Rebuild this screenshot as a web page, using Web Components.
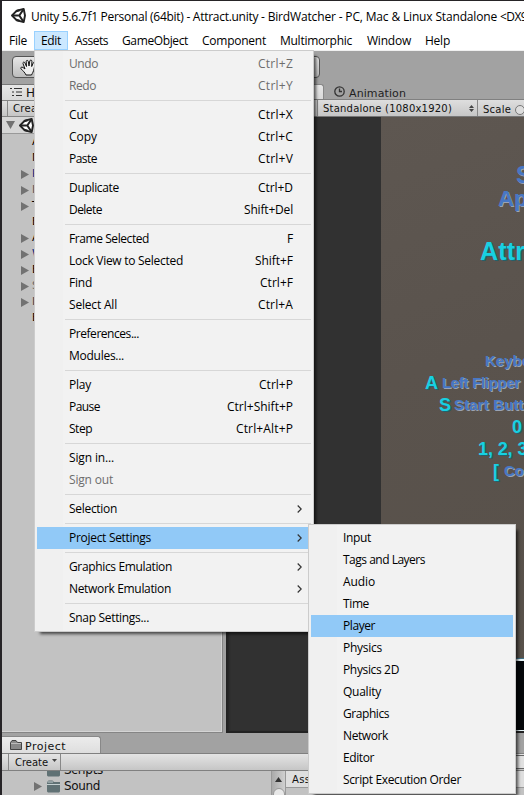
<!DOCTYPE html>
<html lang="en"><head><meta charset="utf-8"><title>Unity</title>
<style>html,body{margin:0;width:524px;height:795px;overflow:hidden}</style></head><body>
<editor-window></editor-window>
<script>
class Base extends HTMLElement{
  render(html){this.attachShadow({mode:'open'}).innerHTML=html;}
}
/* Text whose tracking is adjusted to a given advance width (w, px). */
class FitText extends Base{
  connectedCallback(){
    if(this.shadowRoot)return;
    this.render('<style>:host{display:inline-block;white-space:pre;flex:none}span{display:inline-block;white-space:pre}</style><span><slot></slot></span>');
    const w=parseFloat(this.getAttribute('w')),n=this.textContent.length,s=this.shadowRoot.querySelector('span');
    if(!w)return;
    const nat=s.getBoundingClientRect().width;
    s.style.letterSpacing=((w-nat)/n)+'px';
    this.style.width=w+'px';
  }
}
customElements.define('fit-text',FitText);

class MenuItem extends Base{
  connectedCallback(){
    const a=k=>this.getAttribute(k);
    const [key,kw]=(a('key')||'').split('|');
    this.render(`<style>
      :host{display:flex;height:22px;align-items:center;box-sizing:border-box;padding:0 18px 0 32px;justify-content:space-between;color:#000}
      :host([disabled]){color:#6d6d6d}
      :host([active]){background:#91c9f7}
      :host([sub]){padding-right:9px}
      svg{display:block;width:5px;height:8px}
    </style><fit-text w="${a('w')}">${a('label')}</fit-text>${key?`<fit-text w="${kw}">${key}</fit-text>`:''}${this.hasAttribute('sub')?'<svg viewBox="0 0 5 8"><path d="M.7 .5 4.2 4 .7 7.5" fill="none" stroke="#333" stroke-width="1.2"/></svg>':''}`);
  }
}
customElements.define('menu-item',MenuItem);

class MenuSep extends Base{
  connectedCallback(){this.render('<style>:host{display:block;height:7px;padding:3px 0 0 28px;box-sizing:border-box}i{display:block;height:1px;background:#d7d7d7}</style><i></i>');}
}
customElements.define('menu-sep',MenuSep);

class PopupMenu extends Base{
  connectedCallback(){
    this.render(`<style>:host{display:block;box-sizing:border-box;border:1px solid #ccc;padding:2px;background:linear-gradient(90deg,#f0f0f0 28px,#f2f2f2 28px);box-shadow:4px 4px 3px -2px rgba(0,0,0,.65);font:12px/16px "Open Sans","Noto Sans",sans-serif}</style><slot></slot>`);
  }
}
customElements.define('popup-menu',PopupMenu);

class TitleBar extends Base{
  connectedCallback(){
    this.render(`<style>:host{display:flex;height:30px;background:#fff;align-items:center;padding-left:9px;font:12px/16px "Open Sans","Noto Sans",sans-serif;color:#000;overflow:hidden}
    unity-logo{width:15px;height:15px;margin:-2px 5px 0 0;flex:none}fit-text{padding-top:1px}</style>
    <unity-logo></unity-logo><fit-text w="230">Unity 5.6.7f1 Personal (64bit) - Attract.unity </fit-text><fit-text w="239">- BirdWatcher - PC, Mac &amp; Linux Standalone </fit-text><fit-text w="27">&lt;DX9</fit-text>`);
  }
}
class UnityLogo extends Base{
  connectedCallback(){this.render(`<style>:host{display:block}svg{display:block;width:100%;height:100%}</style>
  <svg viewBox="0 0 15 15"><path d="M1 7.500 5.800 2.600 12.700 1 14 7.500 12.700 14 5.800 12.400Z" fill="#fff" stroke="#222" stroke-width="1.900" stroke-linejoin="round"/><path d="M1.500 7.500H8.300M8.300 7.500 12.400 1.400M8.300 7.500 12.400 13.600" stroke="#222" stroke-width="2"/><path d="M5 3.200 8.600 2.200M5 11.800 8.600 12.800" stroke="#222" stroke-width="2.200"/></svg>`);}
}
customElements.define('unity-logo',UnityLogo);
customElements.define('title-bar',TitleBar);

class MenuBar extends Base{
  connectedCallback(){
    const m=[['File',18],['Edit',20],['Assets',33],['GameObject',66],['Component',64],['Multimorphic',72],['Window',44],['Help',25]];
    this.render(`<style>:host{display:flex;height:20px;background:#fff;box-sizing:border-box;border-bottom:1px solid #f0f0f0;font:12px/16px "Open Sans","Noto Sans",sans-serif;color:#000}
    div{box-sizing:border-box;height:19px;padding:2px 7px 0}.on{background:#cce8ff;border:1px solid #99d1ff;padding:1px 6px 0}div:nth-of-type(n+7){padding-left:8px}div:nth-of-type(8){padding-left:7px}</style>${m.map(([t,w])=>`<div class="${t=='Edit'?'on':''}"><fit-text w="${w}">${t}</fit-text></div>`).join('')}`);
  }
}
customElements.define('menu-bar',MenuBar);

class ToolStrip extends Base{
  connectedCallback(){this.render(`<style>:host{display:flex;height:33px;background:#a2a2a2;box-sizing:border-box;padding:5px 204px 6px 10px}
   .b{flex:1;box-sizing:border-box;height:22px;border:1px solid #555;border-radius:4px;background:linear-gradient(#e6e6e6,#bdbdbd);padding:1px 0 0 7px}svg{display:block}</style>
   <div class="b"><svg width="18" height="19" viewBox="0 0 18 19"><path d="M6 17C5 14.500 3 13 1 10.800 .3 9.500 1.600 8.500 3 9.500L5 11 3 5.500C2.700 4 4.200 3.500 5 5L6.500 8.500 6.200 3.500C6.200 2 8 2 8.300 3.500L9 8 9.800 3C10.100 1.600 11.900 1.800 11.900 3.300L11.700 8.500 13.300 4.800C14 3.500 15.400 4 15.200 5.500L14 11C13.500 13.500 12.500 15 11.500 17Z" fill="#eee" stroke="#111" stroke-width="1"/></svg></div>`);}
}
customElements.define('tool-strip',ToolStrip);

class TreeRow extends Base{
  connectedCallback(){
    const a=k=>this.getAttribute(k);
    this.render(`<style>:host{display:flex;height:16px;align-items:center;padding-left:19px;gap:3px;font:11px/16px "DejaVu Sans",sans-serif;color:${a('c')||'#000'}}i{width:8px;height:9px}svg{display:block}</style>
    <i>${this.hasAttribute('open')?'<svg width="8" height="9"><path d="M0 0 8 4.500 0 9Z" fill="#727272"/></svg>':''}</i><span>${a('t')}</span>`);
  }
}
customElements.define('tree-row',TreeRow);

class HierarchyPanel extends Base{
  connectedCallback(){
    const r=[['A'],['M'],['P',1,'#00287c'],['I',1,'#555'],['T',1],['E'],['A',1],['W',1,'#00287c'],['E',1],['S',1,'#666'],['I',1,'#444'],['E']];
    this.render(`<style>:host{display:flex;flex-direction:column;width:221px;background:#a2a2a2;font:11px/16px "DejaVu Sans",sans-serif;color:#111;overflow:hidden}
    .tab{height:16px;display:flex;background:linear-gradient(#e6e6e6,#d9d9d9);border-top:1px solid #777;box-sizing:border-box;padding:1px 0 0 8px;gap:4px;width:150px}
    .tab svg{margin-top:1px}.tab span{font-size:12px;line-height:15px}
    .bar{height:17px;display:flex;box-sizing:border-box;border-top:1px solid #858585;border-bottom:1px solid #858585;background:linear-gradient(#e0e0e0,#c5c5c5);font-size:10px;line-height:16px;letter-spacing:.3px}
    .bar span{margin-left:5px;border-left:1px solid #888;padding-left:5px}
    .scene{height:17px;box-sizing:border-box;background:#d6d6d6;border-bottom:1px solid #999;display:flex;align-items:center;padding-left:4px;gap:4px}
    unity-logo{width:15px;height:15px}
    .list{flex:1;background:#c2c2c2;border:solid #858585;border-width:0 1px 1px 0;box-shadow:inset -1px -1px #d4d4d4}svg{display:block}</style>
    <div class="tab"><svg width="12" height="10" stroke="#333"><path d="M0 1.500H2M4 1.500H12M2 5H4M6 5H12M2 8.500H4M6 8.500H12"/></svg><span>H</span></div>
    <div class="bar"><span>Crea</span></div>
    <div class="scene"><svg width="9" height="8"><path d="M0 0H9L4.500 8Z" fill="#727272"/></svg><unity-logo></unity-logo></div>
    <div class="list">${r.map(([t,o,c])=>`<tree-row t="${t}" ${o?'open':''} ${c?`c="${c}"`:''}></tree-row>`).join('')}</div>`);
  }
}
customElements.define('hierarchy-panel',HierarchyPanel);

class GameView extends Base{
  connectedCallback(){
    const L=(h,pl,inner)=>`<div class="l" style="height:${h}px;line-height:${h}px;padding-left:${pl}px">${inner}</div>`;
    this.render(`<style>:host{display:flex;flex-direction:column;flex:1;min-width:0;overflow:hidden;font:11px/16px "DejaVu Sans",sans-serif;color:#111}
    .tabs{height:15px;display:flex;background:#a2a2a2}
    .tab{width:98px;box-sizing:border-box;background:linear-gradient(#e6e6e6,#d9d9d9);border:solid #888;border-width:1px 1px 0 0;border-radius:0 3px 0 0;margin-right:10px;flex:none}
    .tabs svg{margin:2px 4px 0 0;flex:none}.tabs fit-text{line-height:20px;color:#222}
    .bar{height:18px;box-sizing:border-box;border-top:1px solid #808080;border-bottom:1px solid #777;background:linear-gradient(#dedede,#c6c6c6);display:flex;font-size:10px;line-height:17px;padding-left:91px}
    .dd{box-sizing:border-box;border:solid #888;border-width:0 1px;width:161px;display:flex;justify-content:space-between;padding:0 3px 0 5px;align-items:center;flex:none}
    .sc{padding:1px 0 0 5px;display:flex;gap:4px}.dot{width:8px;height:8px;margin-top:4px;border:1px solid #777;border-radius:50%;background:#ddd;flex:none}
    .view{flex:1;display:flex;background:#313131;border:1px solid #222;border-width:0 0 2px 1px;min-height:0}
    .pad{width:154px;flex:none;box-shadow:inset 3px 0 2px -1px #242424}
    .game{flex:1;min-width:0;background:linear-gradient(160deg,#5e5751,#5a534d 40%,#575049);display:flex;flex-direction:column;padding-top:46px;box-sizing:border-box;overflow:hidden;font-family:"Liberation Sans",Arial,sans-serif;font-weight:bold}
    .l{white-space:pre;flex:none;font-size:15px;color:#4777c4;text-shadow:1px 1px 0 #9aa3b3;display:flex}
    .c{color:#17d0e2;text-shadow:1px 1px 0 #24606a}
    .box{margin-top:auto;height:69px;border:solid #e4f2f6;border-width:2px 0 1px;background:#05080b;box-shadow:0 -1px #3e6f86;flex:none}
    </style>
    <div class="tabs"><div class="tab"></div><svg width="11" height="11" viewBox="0 0 11 11" fill="none" stroke="#333" stroke-width="1.3"><circle cx="5.500" cy="5.500" r="4.700"/><path d="M5.500 2.500V5.500H8"/></svg><fit-text w="57">Animation</fit-text></div>
    <div class="bar"><div class="dd"><fit-text w="129">Standalone (1080x1920)</fit-text><svg width="5" height="7"><path d="M0 3 2.500 0 5 3ZM0 4 2.500 7 5 4Z" fill="#444"/></svg></div><div class="sc"><fit-text w="28">Scale</fit-text><div class="dot"></div></div></div>
    <div class="view"><div class="pad"></div><div class="game">
      ${L(24,135,'<span style="font-size:23px">S</span>')}
      ${L(24,117,'<span style="font-size:22px">Ap</span>')}
      <div style="height:24px;flex:none"></div>
      ${L(32,99,'<span class="c" style="font-size:25px;letter-spacing:.2px">Attr</span>')}
      <div style="height:83px;flex:none"></div>
      ${L(22,104,'Keybo')}
      ${L(22,44,'<fit-text class="c" w="17" style="font-size:18px">A</fit-text><fit-text w="78">Left Flipper</fit-text>')}
      ${L(22,58,'<fit-text class="c" w="15" style="font-size:18px">S</fit-text><fit-text w="79">Start Butto</fit-text>')}
      ${L(22,131,'<span class="c" style="font-size:18px">0</span>')}
      ${L(22,97,'<span class="c" style="font-size:18px;letter-spacing:-.1px">1, 2, 3</span>')}
      ${L(22,112,'<fit-text class="c" w="11" style="font-size:18px">[</fit-text>Co')}
      <div class="box"></div></div></div>`);
  }
}
customElements.define('game-view',GameView);

class ProjectPanel extends Base{
  connectedCallback(){
    const folder='<svg width="15" height="13" viewBox="0 0 15 13"><path d="M1 11.500V2L2.500 .5H6.500L8 2H14V11.500L13 12.500H2Z" fill="#607174"/><path d="M1 4.500H14M1.500 2H7" stroke="#c4cfd0"/></svg>';
    this.render(`<style>:host{display:flex;flex-direction:column;height:62px;background:#a2a2a2;font:12px/16px "DejaVu Sans",sans-serif;color:#111;overflow:hidden}
    .tabs{height:20px;display:flex;padding-top:3px;box-sizing:border-box}
    .tab{width:99px;box-sizing:border-box;background:linear-gradient(#ececec,#dedede);border:solid #888;border-width:1px 1px 0 0;border-radius:0 3px 0 0;display:flex;padding:2px 0 0 8px;gap:3px;font-size:11px}
    .tab svg{margin-top:1px}
    .bar{height:18px;flex:none;box-sizing:border-box;border-top:1px solid #808080;border-bottom:1px solid #808080;background:linear-gradient(#e4e4e4,#c6c6c6);padding-left:6px;display:flex;font-size:10px;line-height:17px}
    .cr{border:solid #888;border-width:0 1px;width:53px;padding-left:6px;box-sizing:border-box;display:flex;gap:4px}.cr svg{margin-top:5px}
    .find{margin:1px 0 1px auto;width:14px;border:solid #666;border-width:1px 0;background:#e0e0e0}
    .body{flex:1;display:flex;background:#c2c2c2;min-height:0}
    .tree{width:269px;flex:none;overflow:hidden}.r{display:flex;height:16px;align-items:center;gap:4px}.r i{width:8px;height:9px}
    .r fit-text{margin-left:-1px}
    .r svg{display:block}
    .sb{width:15px;box-sizing:border-box;border:solid #999;border-width:0 1px;background:linear-gradient(90deg,#aaa,#d0d0d0);display:flex;flex-direction:column;align-items:center;padding-top:6px;gap:6px;flex:none;overflow:hidden}
    .sb svg{flex:none}
    .th{width:12px;height:22px;border:1px solid #999;border-radius:6px;background:#e8e8e8;box-sizing:border-box;flex:none}
    .as{flex:1}.as div{height:16px;border-bottom:1px solid #999;background:#dedede;padding-left:6px;font-size:10px;line-height:18px;letter-spacing:.4px}
    </style>
    <div class="tabs"><div class="tab"><svg width="12" height="10"><path d="M.5 9.500V2.500L2 .5H6L7.500 2.500H11.500V9.500Z" fill="#888" stroke="#444"/><path d="M1 3.500H11" stroke="#bbb"/></svg><fit-text w="41">Project</fit-text></div></div>
    <div class="bar"><div class="cr"><fit-text w="33">Create</fit-text><svg width="5" height="4"><path d="M0 0H5L2.500 3Z" fill="#444"/></svg></div><div class="find"></div></div>
    <div class="body"><div class="tree"><div style="margin-top:-9px"><div class="r" style="padding-left:32px"><i></i>${folder}<fit-text w="39">Scripts</fit-text></div><div class="r" style="padding-left:32px"><i><svg width="8" height="9"><path d="M0 0 8 4.500 0 9Z" fill="#727272"/></svg></i>${folder}<fit-text w="36">Sound</fit-text></div></div></div>
    <div class="sb"><svg width="7" height="5"><path d="M0 5H7L3.500 0Z" fill="#333"/></svg><div class="th"></div></div><div class="as"><div>Ass</div></div></div>`);
  }
}
customElements.define('project-panel',ProjectPanel);

class EditorWindow extends Base{
  connectedCallback(){
    const edit=[['Undo',29,'Ctrl+Z|35','disabled'],['Redo',27,'Ctrl+Y|35','disabled'],0,['Cut',19,'Ctrl+X|35'],['Copy',28,'Ctrl+C|35'],['Paste',28,'Ctrl+V|35'],0,['Duplicate',50,'Ctrl+D|35'],['Delete',33,'Shift+Del|49'],0,['Frame Selected',80,'F|6'],['Lock View to Selected',114,'Shift+F|38'],['Find',23,'Ctrl+F|33'],['Select All',48,'Ctrl+A|35'],0,['Preferences...',70],['Modules...',55],0,['Play',22,'Ctrl+P|34'],['Pause',31,'Ctrl+Shift+P|66'],['Step',23,'Ctrl+Alt+P|57'],0,['Sign in...',45],['Sign out',44,'','disabled'],0,['Selection',48,'','sub'],0,['Project Settings',82,'','sub active'],0,['Graphics Emulation',103,'','sub'],['Network Emulation',102,'','sub'],0,['Snap Settings...',80]];
    const sub=[['Input',28],['Tags and Layers',82],['Audio',32],['Time',26],['Player',32,'','active'],['Physics',39],['Physics 2D',56],['Quality',38],['Graphics',46],['Network',45],['Editor',31],['Script Execution Order',118]];
    const mk=a=>a.map(x=>x?`<menu-item label="${x[0]}" w="${x[1]}" key="${x[2]||''}" ${x[3]||''}></menu-item>`:'<menu-sep></menu-sep>').join('');
    this.render(`<style>:host{display:flex;flex-direction:column;position:relative;box-sizing:border-box;width:524px;height:795px;border:solid #262427;border-width:1px 0 0 2px;background:#a2a2a2;overflow:hidden}
    main{flex:1;display:flex;gap:3px;min-height:0}
    #m1{position:absolute;left:32px;top:49px;width:280px;height:582px}
    #m2{position:absolute;left:306px;top:523px;width:208px;height:270px}</style>
    <title-bar></title-bar><menu-bar></menu-bar><tool-strip></tool-strip>
    <main><hierarchy-panel></hierarchy-panel><game-view></game-view></main>
    <project-panel></project-panel>
    <popup-menu id="m1">${mk(edit)}</popup-menu><popup-menu id="m2">${mk(sub)}</popup-menu>`);
  }
}
customElements.define('editor-window',EditorWindow);
</script></body></html>
